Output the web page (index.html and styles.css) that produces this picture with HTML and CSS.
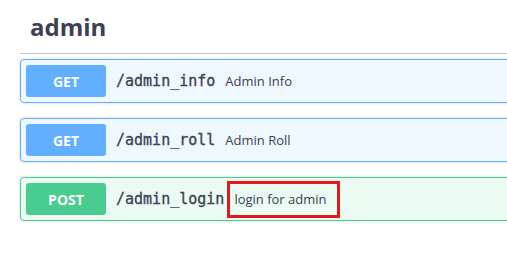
FILE: index.html
```html
<!DOCTYPE html>
<html lang="en">
<head>
  <meta charset="UTF-8" />
  <title>admin</title>
  <link rel="stylesheet" href="styles.css">
</head>
<body>
  <div class="tag-section">
    <h4 class="tag-title">admin</h4>

    <div class="opblock opblock-get">
      <span class="method">GET</span>
      <span class="path">/admin_info</span>
      <span class="description">Admin Info</span>
    </div>

    <div class="opblock opblock-get">
      <span class="method">GET</span>
      <span class="path">/admin_roll</span>
      <span class="description">Admin Roll</span>
    </div>

    <div class="opblock opblock-post">
      <span class="method">POST</span>
      <span class="path">/admin_login</span>
      <span class="description marked">login for admin</span>
    </div>
  </div>
</body>
</html>
```

FILE: styles.css
```css
body {
  margin: 0;
  background: #fff;
  font-family: 'Open Sans', 'Noto Sans', sans-serif;
  color: #3b4151;
  overflow: hidden;
}

.tag-section {
  margin-left: 20px;
  width: 560px;
}

.tag-title {
  margin: 0 0 5px;
  padding: 10px 20px 10px 10px;
  font-size: 24px;
  line-height: 33px;
  font-weight: 700;
  border-bottom: 1px solid rgba(59, 65, 81, 0.3);
}

.opblock {
  display: flex;
  align-items: center;
  padding: 5px;
  margin-bottom: 15px;
  border: 1px solid #000;
  border-radius: 4px;
  box-shadow: 0 0 3px rgba(0, 0, 0, 0.19);
  height: 32px;
}

.opblock-get {
  border-color: #61affe;
  background: rgba(97, 175, 254, 0.1);
}

.opblock-post {
  border-color: #49cc90;
  background: rgba(73, 204, 144, 0.1);
}

.method {
  display: flex;
  align-items: center;
  justify-content: center;
  width: 80px;
  height: 32px;
  flex-shrink: 0;
  border-radius: 3px;
  color: #fff;
  font-size: 14px;
  font-weight: 700;
}

.opblock-get .method { background: #61affe; }
.opblock-post .method { background: #49cc90; }

.path {
  padding: 0 10px;
  font-family: 'DejaVu Sans Mono', monospace;
  font-size: 15px;
  color: #3b4151;
  -webkit-text-stroke: 0.3px #3b4151;
}

.description {
  font-size: 13px;
  color: #3b4151;
}

/* annotation box */
.marked {
  margin-left: -7px;
  padding: 6px 10px 7px 4px;
  line-height: 18px;
  border: 3px solid #e3171c;
}
```
